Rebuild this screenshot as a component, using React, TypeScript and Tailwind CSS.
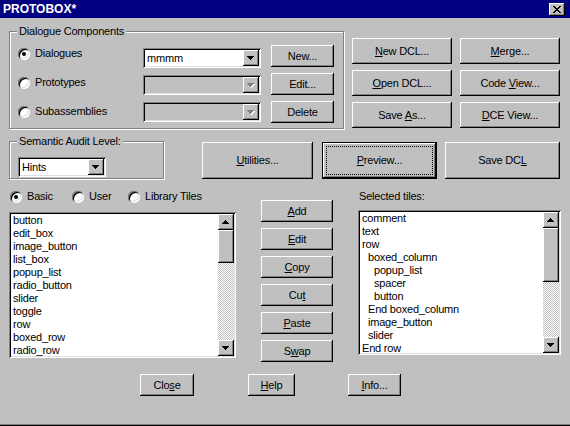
import React from "react";

const raised =
  "bg-[#c0c0c0] shadow-[inset_-1px_-1px_0_#000,inset_1px_1px_0_#fff,inset_-2px_-2px_0_#808080]";
const sunken =
  "shadow-[inset_1px_1px_0_#808080,inset_-1px_-1px_0_#fff,inset_2px_2px_0_#000,inset_-2px_-2px_0_#dfdfdf]";
const etched = "border border-[#808080] shadow-[inset_1px_1px_0_#fff,1px_1px_0_#fff]";
const dither =
  "bg-[repeating-conic-gradient(#c0c0c0_0%_25%,#ffffff_0%_50%)] bg-[length:2px_2px]";

function Accel({ text }: { text: string }) {
  const i = text.indexOf("&");
  if (i < 0) return <span>{text}</span>;
  return (
    <span>
      {text.slice(0, i)}
      <u>{text[i + 1]}</u>
      {text.slice(i + 2)}
    </span>
  );
}

function Btn({ label, className = "" }: { label: string; className?: string }) {
  return (
    <div className={`flex items-center justify-center ${raised} ${className}`}>
      <Accel text={label} />
    </div>
  );
}

function Arrow({ up = false, disabled = false }: { up?: boolean; disabled?: boolean }) {
  const d = up
    ? "M3 0h1v1H3zM2 1h3v1H2zM1 2h5v1H1zM0 3h7v1H0z"
    : "M0 0h7v1H0zM1 1h5v1H1zM2 2h3v1H2zM3 3h1v1H3z";
  return (
    <svg width="8" height="5" viewBox="0 0 8 5" shapeRendering="crispEdges">
      {disabled && <path d={d} fill="#fff" transform="translate(1 1)" />}
      <path d={d} fill={disabled ? "#808080" : "#000"} />
    </svg>
  );
}

function Combo({
  value = "",
  disabled = false,
  className = "",
}: {
  value?: string;
  disabled?: boolean;
  className?: string;
}) {
  return (
    <div
      className={`flex h-[20px] p-[2px] ${sunken} ${disabled ? "bg-[#c0c0c0]" : "bg-white"} ${className}`}
    >
      <div className="flex-1 pl-[2px] leading-[16px]">{value}</div>
      <div className={`flex w-[16px] items-center justify-center ${raised}`}>
        <Arrow disabled={disabled} />
      </div>
    </div>
  );
}

function Radio({
  label,
  checked = false,
  className = "",
}: {
  label: string;
  checked?: boolean;
  className?: string;
}) {
  return (
    <div className={`flex h-[13px] items-center ${className}`}>
      <div
        className={`flex h-[12px] w-[12px] items-center justify-center rounded-full bg-white ${sunken}`}
      >
        {checked && <div className="h-[4px] w-[4px] rounded-full bg-black" />}
      </div>
      <span className="ml-[5px]">{label}</span>
    </div>
  );
}

function ScrollBar({ thumb }: { thumb: string }) {
  return (
    <div className="flex w-[16px] flex-col">
      <div className={`flex h-[16px] items-center justify-center ${raised}`}>
        <Arrow up />
      </div>
      <div className={`${raised} ${thumb}`} />
      <div className={`flex-1 ${dither}`} />
      <div className={`flex h-[16px] items-center justify-center ${raised}`}>
        <Arrow />
      </div>
    </div>
  );
}

function ListBox({
  items,
  thumb,
  className = "",
}: {
  items: { text: string; indent?: number }[];
  thumb: string;
  className?: string;
}) {
  const pads = ["pl-[2px]", "pl-[8px]", "pl-[14px]"];
  return (
    <div className={`flex bg-white p-[2px] ${sunken} ${className}`}>
      <div className="flex-1 overflow-hidden">
        {items.map((it, i) => (
          <div key={i} className={`h-[13px] leading-[13px] ${pads[it.indent ?? 0]}`}>
            {it.text}
          </div>
        ))}
      </div>
      <ScrollBar thumb={thumb} />
    </div>
  );
}

function GroupLabel({ text }: { text: string }) {
  return (
    <div className="absolute -top-[7px] left-[7px] bg-[#c0c0c0] px-[2px] leading-[13px]">
      {text}
    </div>
  );
}

const basicTiles = [
  "button",
  "edit_box",
  "image_button",
  "list_box",
  "popup_list",
  "radio_button",
  "slider",
  "toggle",
  "row",
  "boxed_row",
  "radio_row",
].map((text) => ({ text }));

const selectedTiles = [
  { text: "comment" },
  { text: "text" },
  { text: "row" },
  { text: "boxed_column", indent: 1 },
  { text: "popup_list", indent: 2 },
  { text: "spacer", indent: 2 },
  { text: "button", indent: 2 },
  { text: "End boxed_column", indent: 1 },
  { text: "image_button", indent: 1 },
  { text: "slider", indent: 1 },
  { text: "End row" },
];

export default function App() {
  return (
    <div className="flex h-[426px] w-[570px] flex-col overflow-hidden bg-[#c0c0c0] font-['Liberation_Sans',Arial,sans-serif] text-[11px] leading-[13px] tracking-[-0.2px] text-black shadow-[inset_0_-1px_0_#000,inset_0_-2px_0_#808080]">
      {/* title bar */}
      <div className="flex h-[18px] items-start bg-[#000080] pl-[3px] pr-[5px]">
        <span className="mt-[2px] text-[12px] font-bold leading-[14px] tracking-normal text-white">
          PROTOBOX*
        </span>
        <div className={`ml-auto mt-[3px] flex h-[13px] w-[16px] items-center justify-center ${raised}`}>
          <svg width="8" height="7" viewBox="0 0 8 7" shapeRendering="crispEdges">
            <path
              d="M0 0h2v1H0zM6 0h2v1H6zM1 1h2v1H1zM5 1h2v1H5zM2 2h4v1H2zM3 3h2v1H3zM2 4h4v1H2zM1 5h2v1H1zM5 5h2v1H5zM0 6h2v1H0zM6 6h2v1H6z"
              fill="#000"
            />
          </svg>
        </div>
      </div>

      {/* row 1 */}
      <div className="mt-[13px] flex items-start">
        <div className={`relative ml-[9px] flex h-[98px] w-[335px] ${etched}`}>
          <GroupLabel text="Dialogue Components" />
          <div className="flex w-[133px] flex-col gap-[16px] pl-[8px] pt-[15px]">
            <Radio label="Dialogues" checked />
            <Radio label="Prototypes" />
            <Radio label="Subassemblies" />
          </div>
          <div className="flex w-[118px] flex-col gap-[7px] pt-[16px]">
            <Combo value="mmmm" />
            <Combo disabled />
            <Combo disabled />
          </div>
          <div className="ml-[10px] flex w-[63px] flex-col gap-[6px] pt-[13px]">
            <Btn label="New..." className="h-[22px]" />
            <Btn label="Edit..." className="h-[22px]" />
            <Btn label="Delete" className="h-[22px]" />
          </div>
        </div>
        <div className="ml-[8px] mt-[7px] grid grid-cols-[100px_100px] gap-x-[8px] gap-y-[6px]">
          <Btn label="&New DCL..." className="h-[26px]" />
          <Btn label="&Merge..." className="h-[26px]" />
          <Btn label="&Open DCL..." className="h-[26px]" />
          <Btn label="Code &View..." className="h-[26px]" />
          <Btn label="Save &As..." className="h-[26px]" />
          <Btn label="&DCE View..." className="h-[26px]" />
        </div>
      </div>

      {/* row 2 */}
      <div className="mt-[12px] flex items-start">
        <div className={`relative ml-[9px] h-[38px] w-[155px] ${etched}`}>
          <GroupLabel text="Semantic Audit Level:" />
          <Combo value="Hints" className="ml-[8px] mt-[15px] w-[88px]" />
        </div>
        <Btn label="&Utilities..." className="ml-[38px] mt-[1px] h-[37px] w-[111px]" />
        <div className="ml-[9px] mt-[1px] flex h-[37px] w-[115px] border border-black">
          <div className={`flex flex-1 p-[3px] ${raised}`}>
            <div className="flex flex-1 items-center justify-center border border-dotted border-black">
              <Accel text="&Preview..." />
            </div>
          </div>
        </div>
        <Btn label="Save DC&L" className="ml-[8px] mt-[1px] h-[37px] w-[115px]" />
      </div>

      {/* row 3 */}
      <div className="mt-[7px] flex items-start">
        <div className="ml-[9px] flex w-[227px] flex-col">
          <div className="mt-[4px] flex">
            <Radio label="Basic" checked className="ml-[1px] w-[62px]" />
            <Radio label="User" className="w-[56px]" />
            <Radio label="Library Tiles" />
          </div>
          <ListBox items={basicTiles} thumb="h-[33px]" className="mt-[9px] h-[146px]" />
        </div>
        <div className="ml-[25px] mt-[14px] flex w-[72px] flex-col gap-[6px]">
          <Btn label="&Add" className="h-[22px]" />
          <Btn label="&Edit" className="h-[22px]" />
          <Btn label="&Copy" className="h-[22px]" />
          <Btn label="Cu&t" className="h-[22px]" />
          <Btn label="&Paste" className="h-[22px]" />
          <Btn label="S&wap" className="h-[22px]" />
        </div>
        <div className="ml-[25px] flex w-[203px] flex-col">
          <div className="mt-[4px] pl-[1px]">Selected tiles:</div>
          <ListBox items={selectedTiles} thumb="h-[54px]" className="mt-[7px] h-[145px]" />
        </div>
      </div>

      {/* row 4 */}
      <div className="mt-[12px] flex">
        <Btn label="Clo&se" className="ml-[140px] h-[22px] w-[54px]" />
        <Btn label="&Help" className="ml-[54px] h-[22px] w-[47px]" />
        <Btn label="&Info..." className="ml-[53px] h-[22px] w-[53px]" />
      </div>
    </div>
  );
}
